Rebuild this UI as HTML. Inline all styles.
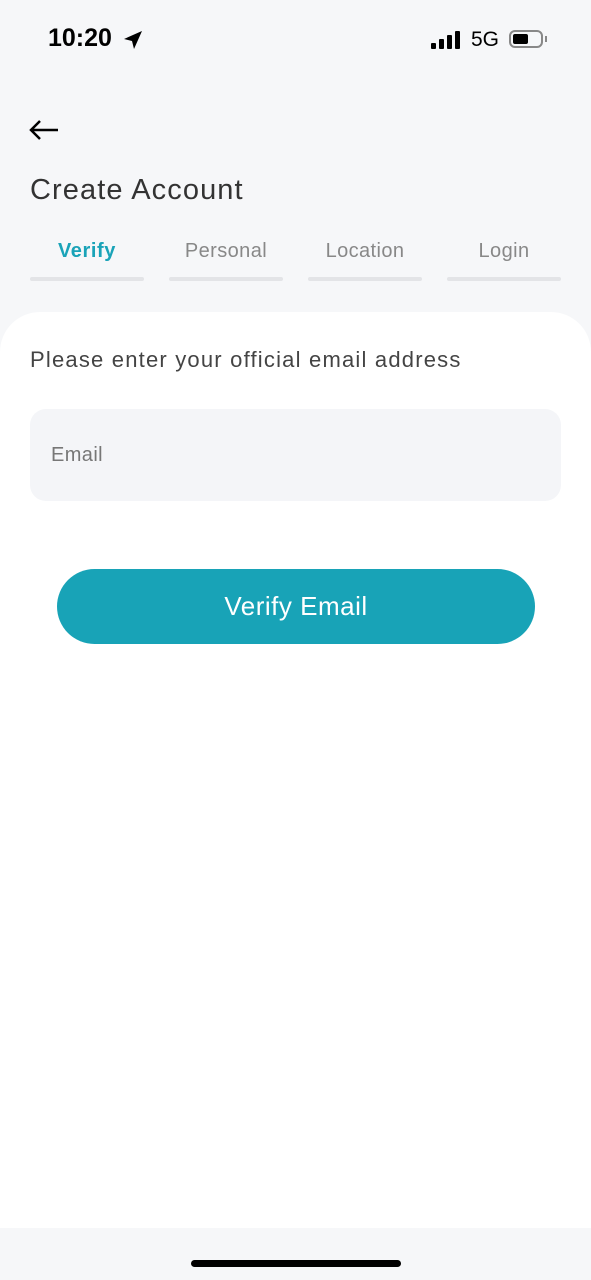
<!DOCTYPE html>
<html><head><style>
body{margin:0;width:591px;height:1280px;background:#f6f7f9;font-family:"Liberation Sans",sans-serif;position:relative;overflow:hidden}
.a{position:absolute}
</style></head><body>
<div class="a" style="left:48px;top:24px;font-size:25px;font-weight:bold;color:#000">10:20</div>
<svg class="a" style="left:122px;top:29px" width="22" height="22" viewBox="0 0 22 22"><path d="M20 2L2 10l8 2 2 8z" fill="#000"/></svg>
<svg class="a" style="left:431px;top:30px" width="32" height="20"><rect x="0" y="13" width="5" height="6" rx="1"/><rect x="8" y="9" width="5" height="10" rx="1"/><rect x="16" y="5" width="5" height="14" rx="1"/><rect x="24" y="1" width="5" height="18" rx="1"/></svg>
<div class="a" style="left:471px;top:28px;font-size:21px;color:#000">5G</div>
<div class="a" style="left:509px;top:30px;width:34px;height:18px;border:2px solid #888;border-radius:6px;box-sizing:border-box"><div style="margin:2px;width:15px;height:10px;background:#000;border-radius:2px"></div></div>
<div class="a" style="left:545px;top:36px;width:2px;height:6px;background:#888"></div>
<svg class="a" style="left:28px;top:119px" width="32" height="22"><path d="M30 11H3M12 2L3 11l9 9" stroke="#000" stroke-width="2.5" fill="none"/></svg>
<div class="a" style="left:30px;top:174px;font-size:29px;letter-spacing:1.1px;color:#333">Create Account</div>
<div class="a" style="left:30px;top:240px;width:114px;text-align:center;font-size:20px;letter-spacing:0.6px;font-weight:bold;color:#1aa3b8">Verify</div>
<div class="a" style="left:169px;top:240px;width:114px;text-align:center;font-size:20px;letter-spacing:0.4px;color:#888">Personal</div>
<div class="a" style="left:308px;top:240px;width:114px;text-align:center;font-size:20px;letter-spacing:0.4px;color:#888">Location</div>
<div class="a" style="left:447px;top:240px;width:114px;text-align:center;font-size:20px;letter-spacing:0.4px;color:#888">Login</div>
<div class="a" style="left:30px;top:277px;width:114px;height:4px;background:#e3e4e7;border-radius:2px"></div>
<div class="a" style="left:169px;top:277px;width:114px;height:4px;background:#e3e4e7;border-radius:2px"></div>
<div class="a" style="left:308px;top:277px;width:114px;height:4px;background:#e3e4e7;border-radius:2px"></div>
<div class="a" style="left:447px;top:277px;width:114px;height:4px;background:#e3e4e7;border-radius:2px"></div>
<div class="a" style="left:0;top:312px;width:591px;height:916px;background:#fff;border-radius:40px 40px 0 0"></div>
<div class="a" style="left:30px;top:347px;font-size:22px;letter-spacing:1.2px;color:#444;white-space:nowrap">Please enter your official email address</div>
<div class="a" style="left:30px;top:409px;width:531px;height:92px;background:#f4f5f8;border-radius:16px"></div>
<div class="a" style="left:51px;top:444px;font-size:20px;letter-spacing:0.4px;color:#777">Email</div>
<div class="a" style="left:57px;top:569px;width:478px;height:75px;background:#18a3b7;border-radius:38px;color:#fff;font-size:26px;letter-spacing:0.5px;text-align:center;line-height:75px">Verify Email</div>
<div class="a" style="left:191px;top:1260px;width:210px;height:7px;background:#000;border-radius:4px"></div>
</body></html>
